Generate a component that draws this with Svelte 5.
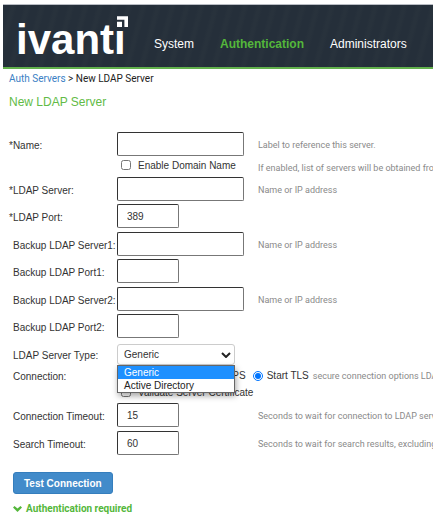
<script>
  const tabs = ['System', 'Authentication', 'Administrators'];
  const types = ['Generic', 'Active Directory'];

  let activeTab = $state('Authentication');
  let menuOpen = $state(true);
  let connection = $state('starttls');
  let form = $state({
    name: '',
    useDomain: false,
    server: '',
    port: '389',
    server1: '',
    port1: '',
    server2: '',
    port2: '',
    type: 'Generic',
    validate: false,
    connTimeout: '15',
    searchTimeout: '60'
  });

  const hosts = [
    {key: 'server', label: '*LDAP Server:', help: 'Name or IP address', required: true},
    {key: 'port', label: '*LDAP Port:', small: true, required: true},
    {key: 'server1', label: 'Backup LDAP Server1:', help: 'Name or IP address'},
    {key: 'port1', label: 'Backup LDAP Port1:', small: true},
    {key: 'server2', label: 'Backup LDAP Server2:', help: 'Name or IP address'},
    {key: 'port2', label: 'Backup LDAP Port2:', small: true}
  ];

  const timeouts = [
    {key: 'connTimeout', label: 'Connection Timeout:', help: 'Seconds to wait for connection to LDAP server'},
    {key: 'searchTimeout', label: 'Search Timeout:', help: 'Seconds to wait for search results, excluding connection time'}
  ];

  function pick(type) {
    form.type = type;
    menuOpen = false;
  }
</script>

{#snippet field(f)}
  <div class="row" class:port={f.small}>
    <label class="name" class:required={f.required} for={f.key}>{f.label}</label>
    <div><input class="text" class:small={f.small} id={f.key} type="text" bind:value={form[f.key]} /></div>
    <span class="help">{f.help ?? ''}</span>
  </div>
{/snippet}

<div class="page">
  <header>
    <a class="logo" href="#home">ivanti
      <svg viewBox="0 0 13 15" aria-hidden="true">
        <rect width="13" height="15" fill="#252f3a" />
        <path d="M1 0.3H12V11H8.4V3.8H1Z M1 5.8H6V11H1Z" fill="#fff" />
      </svg>
    </a>
    <nav>
      {#each tabs as tab}
        <a href="#{tab}" class:active={tab === activeTab} onclick={() => (activeTab = tab)}>{tab}</a>
      {/each}
    </nav>
  </header>

  <main>
    <div class="crumbs"><a href="#servers">Auth Servers</a> &gt; New LDAP Server</div>
    <h1>New LDAP Server</h1>

    <form>
      {@render field({key: 'name', label: '*Name:', help: 'Label to reference this server.', required: true})}

      <div class="row domain">
        <span></span>
        <label class="check"><input type="checkbox" bind:checked={form.useDomain} />Enable Domain Name</label>
        <span class="help">If enabled, list of servers will be obtained from DNS</span>
      </div>

      {#each hosts as host}
        {@render field(host)}
      {/each}

      <div class="row type">
        <label class="name" for="type">LDAP Server Type:</label>
        <div class="picker">
          <select id="type" bind:value={form.type} onmousedown={(e) => { e.preventDefault(); menuOpen = !menuOpen; }}>
            {#each types as type}
              <option>{type}</option>
            {/each}
          </select>
          <svg class="arrow" viewBox="0 0 10 6" aria-hidden="true">
            <path d="M1 1l4 4 4-4" fill="none" stroke="#222" stroke-width="2" />
          </svg>
          {#if menuOpen}
            <div class="menu">
              {#each types as type}
                <button type="button" class:selected={type === form.type} onclick={() => pick(type)}>{type}</button>
              {/each}
            </div>
          {/if}
        </div>
      </div>

      <div class="row connection">
        <span class="name">Connection:</span>
        <div class="options">
          <label><input type="radio" value="none" bind:group={connection} />None</label>
          <label class="ldaps"><input type="radio" value="ldaps" bind:group={connection} />LDAPS</label>
          <label><input type="radio" value="starttls" bind:group={connection} />Start TLS</label>
          <span class="help">secure connection options LDAP server</span>
        </div>
      </div>

      <div class="row validate">
        <span></span>
        <label class="check"><input type="checkbox" bind:checked={form.validate} />Validate Server Certificate</label>
      </div>

      {#each timeouts as t}
        {@render field({...t, small: true})}
      {/each}

      <button class="test" type="button">Test Connection</button>
      <button class="auth" type="button">
        <svg viewBox="0 0 9 6" aria-hidden="true">
          <path d="M0 1.5L1.5 0L4.5 2.4L7.5 0L9 1.5L4.5 6Z" fill="#54b73b" />
        </svg>
        Authentication required
      </button>
    </form>
  </main>
</div>

<style>
  :global(body) {
    background: #fff;
  }

  .page {
    padding: 4px 4px 0 3px;
    font-family: "Liberation Sans", Arial, sans-serif;
    font-size: 10px;
    color: #333;
  }

  header {
    display: flex;
    align-items: flex-start;
    height: 62px;
    border-top: 1px solid #b9bdc4;
    border-bottom: 2px solid #62b14c;
    background: repeating-linear-gradient(105deg, #252f3a 0 6px, #28323c 9px 11px, #252f3a 14px);
    overflow: hidden;
  }

  .logo {
    position: relative;
    margin: 10px 0 0 13px;
    width: 122px;
    flex: none;
    font: bold 42px/50px "Liberation Sans", Arial, sans-serif;
    color: #fff;
    text-decoration: none;
  }

  /* arrow mark that stands in for the last dot */
  .logo svg {
    position: absolute;
    left: 100px;
    top: 1px;
    width: 13px;
    height: 15px;
  }

  nav {
    display: flex;
    gap: 26px;
    margin: 31px 0 0 16px;
    font-size: 12px;
    line-height: 16px;
  }

  nav a {
    color: #fff;
    text-decoration: none;
  }

  nav .active {
    color: #54b73b;
    font-weight: bold;
  }

  main {
    padding-left: 6px;
    overflow: hidden;
  }

  .crumbs {
    margin-top: 3px;
    font-family: Roboto, sans-serif;
    font-size: 10px;
    line-height: 14px;
    color: #222;
  }

  .crumbs a {
    color: #3a80c4;
    text-decoration: none;
  }

  h1 {
    margin: 8px 0 22px;
    font-size: 12px;
    font-weight: normal;
    line-height: 16px;
    color: #62bb46;
  }

  .row {
    display: grid;
    grid-template-columns: 108px 141px 1fr;
    align-items: center;
    margin-bottom: 3px;
    white-space: nowrap;
  }

  .port {
    margin-bottom: 4px;
  }

  .name {
    padding: 2px 0 0 4px;
  }

  .required {
    padding-left: 0;
  }

  .help {
    padding-top: 2px;
    font-family: Roboto, sans-serif;
    font-size: 9px;
    color: #8a8a8a;
  }

  .text {
    display: block;
    box-sizing: border-box;
    width: 127px;
    height: 24px;
    padding: 0 9px;
    border: 1px solid #777;
    border-top-color: #333;
    border-left-color: #333;
    border-radius: 2px;
    font: 10px "Liberation Sans", Arial, sans-serif;
    color: #333;
    background: #fff;
  }

  .small {
    width: 62px;
  }

  .domain {
    height: 18px;
    margin-top: -3px;
    margin-bottom: 3px;
  }

  .domain .help {
    padding-top: 6px;
  }

  .check {
    display: flex;
    align-items: center;
    gap: 7px;
    padding-left: 4px;
  }

  .check input {
    width: 10px;
    height: 10px;
    margin: 0;
  }

  .type {
    margin: 6px 0 0;
  }

  .picker {
    position: relative;
    width: 118px;
  }

  select {
    display: block;
    box-sizing: border-box;
    width: 100%;
    height: 21px;
    padding: 0 6px;
    appearance: none;
    border: 1px solid #ccc;
    border-radius: 3px;
    background: #fff;
    font: 10px "Liberation Sans", Arial, sans-serif;
    color: #333;
  }

  .arrow {
    position: absolute;
    right: 4px;
    top: 8px;
    width: 10px;
    height: 6px;
    pointer-events: none;
  }

  .menu {
    position: absolute;
    z-index: 1;
    top: 21px;
    left: 0;
    width: 116px;
    border: 1px solid #666;
    background: #fff;
    box-shadow: 1px 3px 6px rgba(0, 0, 0, 0.35);
  }

  .menu button {
    display: block;
    width: 100%;
    height: 13px;
    padding: 0 6px;
    border: 0;
    background: #fff;
    font: 10px/13px "Liberation Sans", Arial, sans-serif;
    color: #222;
    text-align: left;
  }

  .menu .selected {
    background: #1e90ff;
    color: #fff;
  }

  .connection {
    grid-template-columns: 108px 1fr;
    height: 20px;
    margin: 0;
  }

  .options {
    display: flex;
    align-items: center;
    gap: 7px;
    padding-left: 4px;
  }

  .options label {
    display: flex;
    align-items: center;
    gap: 4px;
    flex: none;
  }

  .options input {
    width: 10px;
    height: 10px;
    margin: 2px 0 0;
  }

  .ldaps {
    margin-left: 33px;
  }

  .options .help {
    margin-left: -3px;
  }

  .validate {
    height: 14px;
    margin-bottom: 4px;
  }

  .test {
    display: block;
    height: 22px;
    margin: 17px 0 0 4px;
    padding: 0 10px;
    border: 1px solid #357ebd;
    border-radius: 3px;
    background: #428bca;
    font: bold 10px "Liberation Sans", Arial, sans-serif;
    color: #fff;
  }

  .auth {
    display: flex;
    align-items: center;
    gap: 4px;
    margin: 9px 0 0 4px;
    padding: 0;
    border: 0;
    background: none;
    font: bold 10px/12px Roboto, sans-serif;
    color: #54b73b;
  }

  .auth svg {
    width: 9px;
    height: 6px;
  }
</style>
